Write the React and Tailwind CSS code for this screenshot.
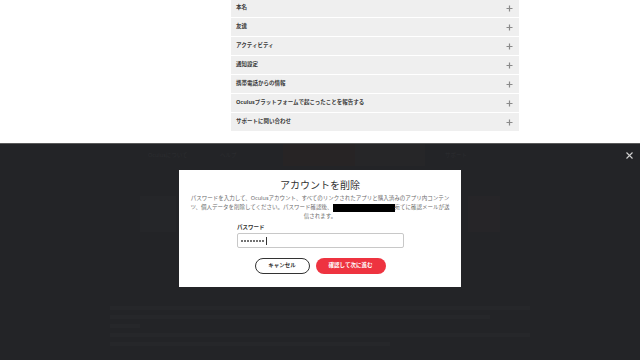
import React from 'react';

const rows = [
  '本名',
  '友達',
  'アクティビティ',
  '通知設定',
  '携帯電話からの情報',
  'Oculusプラットフォームで起こったことを報告する',
  'サポートに問い合わせ',
];

const font = { fontFamily: '"Noto Sans", "Noto Sans CJK JP", sans-serif' };

function Plus() {
  return (
    <svg width="7" height="7" viewBox="0 0 7 7">
      <path d="M3.5 0.5v6M0.5 3.5h6" stroke="#8a8a8a" strokeWidth="1.2" />
    </svg>
  );
}

function App() {
  return (
    <div className="w-[640px] h-[360px] overflow-hidden bg-white flex flex-col" style={font}>
      {/* page behind: settings accordion */}
      <div className="h-[143px] shrink-0 bg-white">
        <div className="ml-[231px] w-[288px] -mt-px flex flex-col gap-px">
          {rows.map((r) => (
            <div key={r} className="h-[18px] bg-[#efefef] pl-[5px] pr-[6px] flex items-center justify-between">
              <span className="text-[5.5px] font-bold text-[#3a3a3a] leading-none">{r}</span>
              <Plus />
            </div>
          ))}
        </div>
      </div>

      {/* dimmed area */}
      <div className="relative flex-1 bg-[#232427] border-t border-[#5a5a5a]">
        <div className="flex items-center h-[22px] ml-[140px] text-[5.5px] text-[#2c2d30]">
          <div className="w-[80px] pl-[8px]">Oculusについて</div>
          <div className="w-[63px]">ヘルプ</div>
          <div className="w-[72px] h-full bg-[#272425]" />
          <div className="w-[70px] h-full bg-[#262628]" />
          <div className="pl-[20px]">サポート</div>
        </div>
        <div className="flex justify-between mx-[140px] mt-[30px]">
          <div className="w-[36px] h-[36px] bg-[#252629]" />
          <div className="w-[32px] h-[36px] bg-[#262528]" />
        </div>
        <div className="ml-[110px] w-[420px] mt-[74px] flex flex-col gap-[5px]">
          <div className="h-[4px] bg-[#26272a]" />
          <div className="h-[4px] w-[380px] bg-[#26272a]" />
          <div className="h-[4px] w-[30px] bg-[#26272a]" />
          <div className="h-[4px] bg-[#26272a]" />
          <div className="h-[4px] w-[280px] bg-[#26272a]" />
        </div>

        <svg className="absolute left-[626px] top-[8px]" width="7" height="7" viewBox="0 0 7 7">
          <path d="M0.5 0.5l6 6M6.5 0.5l-6 6" stroke="#d0d0d0" strokeWidth="1.1" />
        </svg>

        {/* modal */}
        <div className="absolute left-[179px] top-[26px] w-[282px] h-[117px] bg-white flex flex-col items-center">
          <h2 className="mt-[8px] text-[10px] leading-[14px] text-[#333] font-normal">アカウントを削除</h2>
          <p className="mt-[2px] text-[5.5px] leading-[9px] text-[#6b6b6b] text-center whitespace-nowrap">
            パスワードを入力して、Oculusアカウント、すべてのリンクされたアプリと購入済みのアプリ内コンテン
            <br />
            ツ、個人データを削除してください。パスワード確認後、
            <span className="inline-block w-[62px] h-[8px] bg-black align-middle" />
            宛てに確認メールが送
            <br />
            信されます。
          </p>
          <div className="w-[167px] mt-[2px] ml-[1px]">
            <div className="text-[5.5px] leading-[8px] font-bold text-[#333]">パスワード</div>
            <div className="mt-[2px] h-[15px] border border-[#c8c8c8] rounded-[2px] flex items-center pl-[3px] gap-[1px]">
              {[0, 1, 2, 3, 4, 5, 6, 7].map((i) => (
                <span key={i} className="w-[2px] h-[2px] rounded-full bg-[#444]" />
              ))}
              <span className="ml-px w-px h-[8px] bg-[#333]" />
            </div>
          </div>
          <div className="mt-[10px] flex gap-[6px]">
            <button className="w-[55px] h-[16px] rounded-full border border-[#333] bg-white text-[5.5px] font-bold text-[#333] leading-none">
              キャンセル
            </button>
            <button className="w-[70px] h-[16px] rounded-full bg-[#ee3340] text-[5.5px] font-bold text-white leading-none">
              確認して次に進む
            </button>
          </div>
        </div>
      </div>
    </div>
  );
}

export default App;
